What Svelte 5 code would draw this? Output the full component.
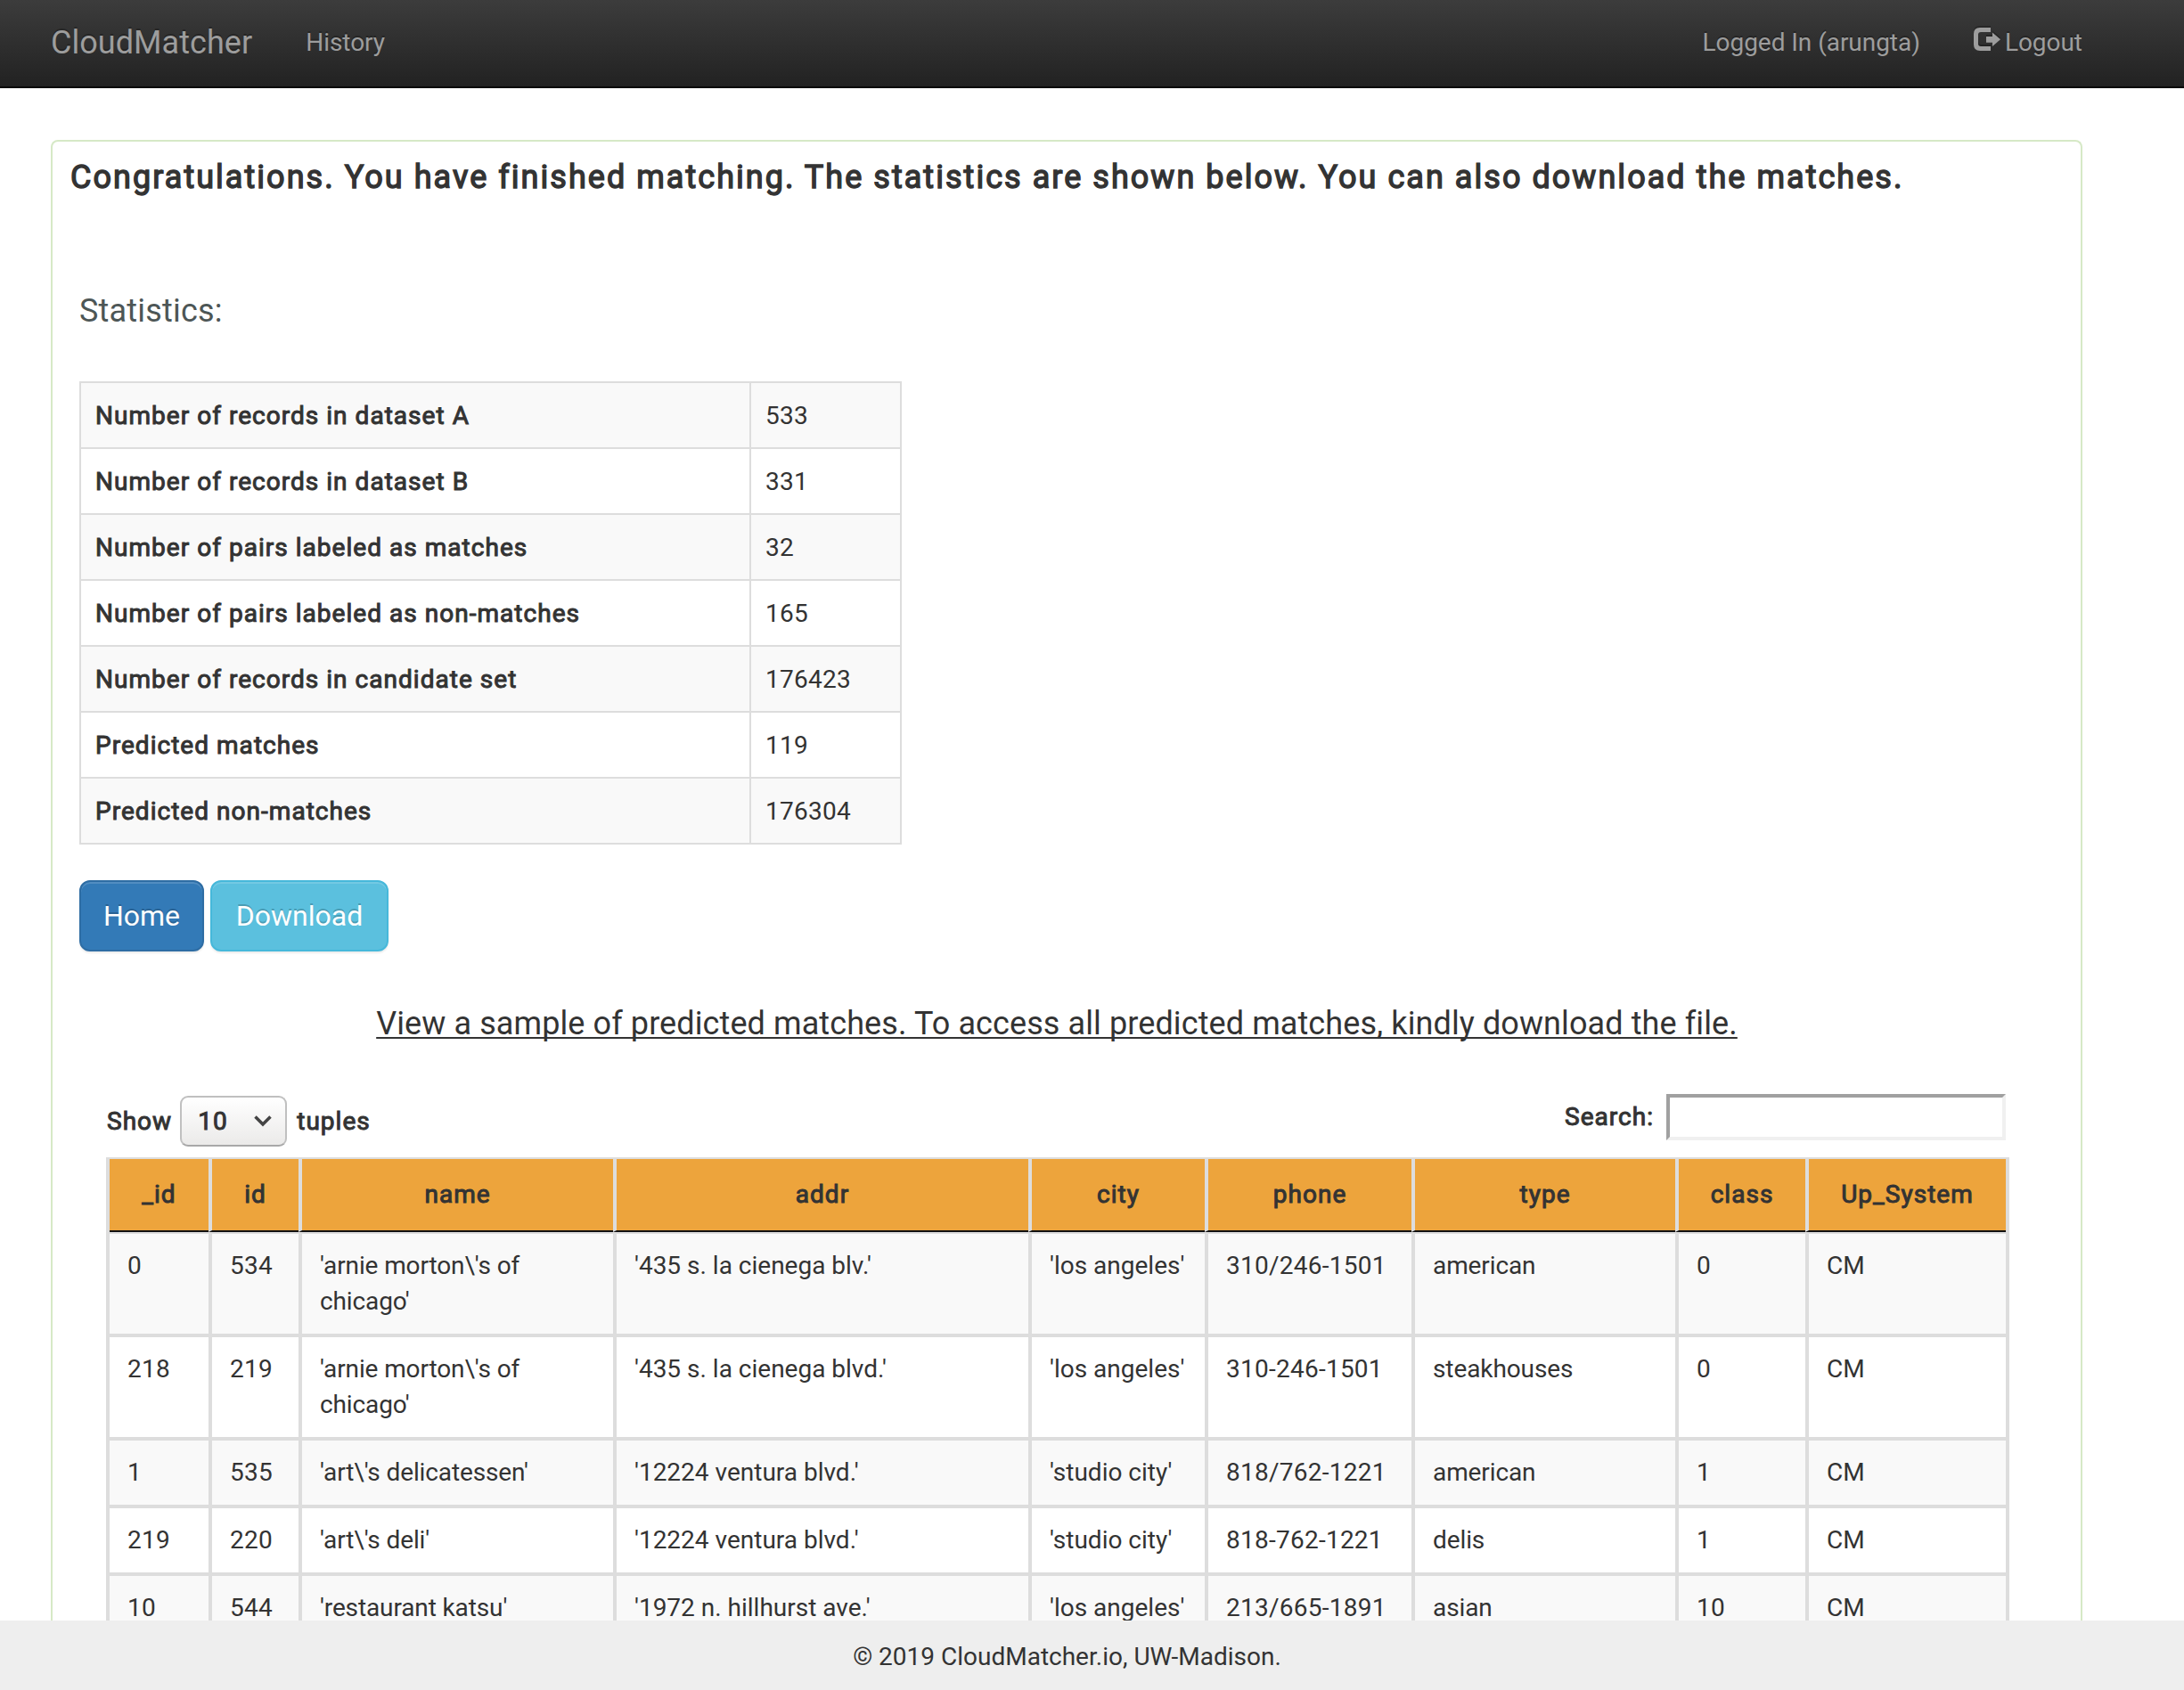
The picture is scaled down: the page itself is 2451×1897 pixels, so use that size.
<script lang="ts">
  const stats: [string, string][] = [
    ['Number of records in dataset A', '533'],
    ['Number of records in dataset B', '331'],
    ['Number of pairs labeled as matches', '32'],
    ['Number of pairs labeled as non-matches', '165'],
    ['Number of records in candidate set', '176423'],
    ['Predicted matches', '119'],
    ['Predicted non-matches', '176304'],
  ];
  const columns = ['_id', 'id', 'name', 'addr', 'city', 'phone', 'type', 'class', 'Up_System'];
  const rows = [
    ['0', '534', "'arnie morton\\'s of chicago'", "'435 s. la cienega blv.'", "'los angeles'", '310/246-1501', 'american', '0', 'CM'],
    ['218', '219', "'arnie morton\\'s of chicago'", "'435 s. la cienega blvd.'", "'los angeles'", '310-246-1501', 'steakhouses', '0', 'CM'],
    ['1', '535', "'art\\'s delicatessen'", "'12224 ventura blvd.'", "'studio city'", '818/762-1221', 'american', '1', 'CM'],
    ['219', '220', "'art\\'s deli'", "'12224 ventura blvd.'", "'studio city'", '818-762-1221', 'delis', '1', 'CM'],
    ['10', '544', "'restaurant katsu'", "'1972 n. hillhurst ave.'", "'los angeles'", '213/665-1891', 'asian', '10', 'CM'],
  ];
</script>

<div class="page">
  <nav class="navbar">
    <span class="brand">CloudMatcher</span>
    <span class="link">History</span>
    <span class="link user">Logged In (arungta)</span>
    <span class="link logout">
      <svg class="exit" viewBox="0 0 30 26" width="30" height="26" aria-hidden="true">
        <path d="M19 0H7Q0 0 0 7V19Q0 26 7 26H19V21H8Q5 21 5 18V8Q5 5 8 5H19Z" />
        <path d="M14 10H21V5.500L30 13.300L21 21V16.700H14Z" />
      </svg>
      <span>Logout</span>
    </span>
  </nav>

  <main class="card">
    <h1 class="strong">Congratulations. You have finished matching. The statistics are shown below. You can also download the matches.</h1>
    <div class="body">
      <h2>Statistics:</h2>
      <div class="stats">
        {#each stats as [label, value]}
          <div class="stat">
            <span class="label strong">{label}</span>
            <span class="value">{value}</span>
          </div>
        {/each}
      </div>
      <div class="buttons">
        <button class="btn home">Home</button>
        <button class="btn download">Download</button>
      </div>
      <h3>View a sample of predicted matches. To access all predicted matches, kindly download the file.</h3>
      <div class="controls">
        <div class="length strong">
          <span class="word">Show</span>
          <span class="select">
            10
            <svg width="22" height="14" viewBox="0 0 22 14" aria-hidden="true"><path d="M2.500 2.500L11 11L19.500 2.500" /></svg>
          </span>
          <span class="word">tuples</span>
        </div>
        <label class="search strong"><span>Search:</span><input type="text" /></label>
      </div>
      <div class="grid">
        <div class="row head">
          {#each columns as column}<div class="cell strong">{column}</div>{/each}
        </div>
        {#each rows as row}
          <div class="row">
            {#each row as cell, i}<div class="cell {columns[i]}">{cell}</div>{/each}
          </div>
        {/each}
      </div>
    </div>
  </main>

  <footer>© 2019 CloudMatcher.io, UW-Madison.</footer>
</div>

<style>
  :global(body) { margin: 0; background: #fff; }
  * { box-sizing: border-box; }
  .page {
    height: 1897px;
    overflow: hidden;
    display: flex;
    flex-direction: column;
    font: 28px/40px Roboto, sans-serif;
    color: #333;
  }
  .strong {
    font-weight: 400;
    letter-spacing: 1.03px;
    -webkit-text-stroke: 1px currentColor;
  }
  .navbar {
    flex: none;
    height: 99px;
    display: flex;
    align-items: center;
    padding: 0 114px 1px 57px;
    border-bottom: 2px solid #080808;
    background: linear-gradient(#3c3c3c, #222);
    color: #9d9d9d;
    text-shadow: 0 -2px 0 rgba(0, 0, 0, 0.25);
  }
  .brand { font-size: 36px; letter-spacing: 0.05px; margin-right: 60px; }
  .link { letter-spacing: -0.04px; }
  .user { margin-left: auto; }
  .logout { display: flex; align-items: center; gap: 5px; margin-left: 60px; }
  .exit { fill: #9d9d9d; margin-top: -8px; filter: drop-shadow(0 -2px 0 rgba(0, 0, 0, 0.25)); }
  .card {
    flex: 1;
    min-height: 0;
    overflow: hidden;
    width: 2280px;
    margin: 58px 0 0 57px;
    border: 2px solid #d6e9c6;
    border-bottom: 0;
    border-radius: 8px 8px 0 0;
  }
  h1.strong {
    margin: 20px 0 0 20px;
    font-size: 36px;
    line-height: 40px;
    white-space: nowrap;
    letter-spacing: 2.04px;
    -webkit-text-stroke-width: 1.4px;
  }
  .body { padding: 0 82px 0 30px; }
  h2 { margin: 110px 0 59px; font-size: 36px; line-height: 40px; font-weight: 400; letter-spacing: 0.2px; color: #4d5656; }
  .stats { width: 923px; border: 2px solid #ddd; border-bottom: 0; }
  .stat { display: grid; grid-template-columns: 750px 1fr; height: 74px; border-bottom: 2px solid #ddd; }
  .stat:nth-child(odd) { background: #f9f9f9; }
  .stat span { padding: 17px 16px 15px; }
  .stat .value { border-left: 2px solid #ddd; letter-spacing: 0.28px; }
  .buttons { display: flex; gap: 7px; margin-top: 40px; }
  .btn {
    height: 80px;
    border-radius: 12px;
    padding: 0;
    font: 32px/40px Roboto, sans-serif;
    color: #fff;
    text-shadow: 0 -2px 0 rgba(0, 0, 0, 0.2);
    box-shadow: inset 0 2px 0 rgba(255, 255, 255, 0.15), 0 2px 2px rgba(0, 0, 0, 0.075);
  }
  .home { width: 140px; background: #337ab7; border: 2px solid #2e6da4; }
  .download { width: 200px; background: #5bc0de; border: 2px solid #46b8da; }
  h3 {
    margin: 61px 0 0 30px;
    font-size: 36px;
    line-height: 40px;
    font-weight: 400;
    letter-spacing: 0.1px;
    text-align: center;
    text-decoration: underline;
    text-decoration-skip-ink: none;
    text-decoration-thickness: 2px;
    text-underline-offset: 3px;
  }
  .controls { display: flex; justify-content: space-between; margin: 59px 2px 0 31px; height: 71px; }
  .length { display: flex; align-items: center; height: 60px; }
  .word { padding-top: 2px; }
  .select {
    display: flex;
    align-items: center;
    gap: 28px;
    width: 120px;
    height: 57px;
    margin: 0 11px 0 9px;
    padding: 2px 0 0 18px;
    border: 2px solid #c0c0c0;
    border-bottom-color: #a8a8a8;
    border-radius: 9px;
    background: linear-gradient(#fff, #ebeae9);
  }
  .select svg { fill: none; stroke: #444; stroke-width: 3.500; margin-top: -2px; }
  .search { display: flex; height: 52px; line-height: 52px; }
  .search input {
    width: 381px;
    height: 52px;
    margin-left: 14px;
    border: 4px solid;
    border-color: #a0a0a0 #f0f0f0 #f0f0f0 #a0a0a0;
    background: #fff;
  }
  .grid { width: 2136px; margin-left: 30px; border: 2px solid #ddd; border-right-width: 4px; border-left-width: 4px; }
  .row { display: grid; grid-template-columns: 111px 101px 353px 466px 198px 232px 296px 146px 1fr; border-bottom: 4px solid #ddd; }
  .row:nth-child(even) { background: #f9f9f9; }
  .cell { padding: 16px 20px; border-left: 4px solid #ddd; }
  .cell:first-child { border-left: 0; }
  .cell._id, .cell.id, .cell.phone, .cell.class { letter-spacing: 0.25px; }
  .cell.name { letter-spacing: -0.12px; }
  .cell.type { letter-spacing: -0.1px; }
  .head { height: 84px; background: #eda43c; border-bottom-width: 2px; }
  .head .cell { padding: 20px 0 0; text-align: center; border-bottom: 2px solid #111; }
  footer { flex: none; height: 78px; background: #eee; text-align: center; line-height: 82px; padding-right: 56px; }
</style>
